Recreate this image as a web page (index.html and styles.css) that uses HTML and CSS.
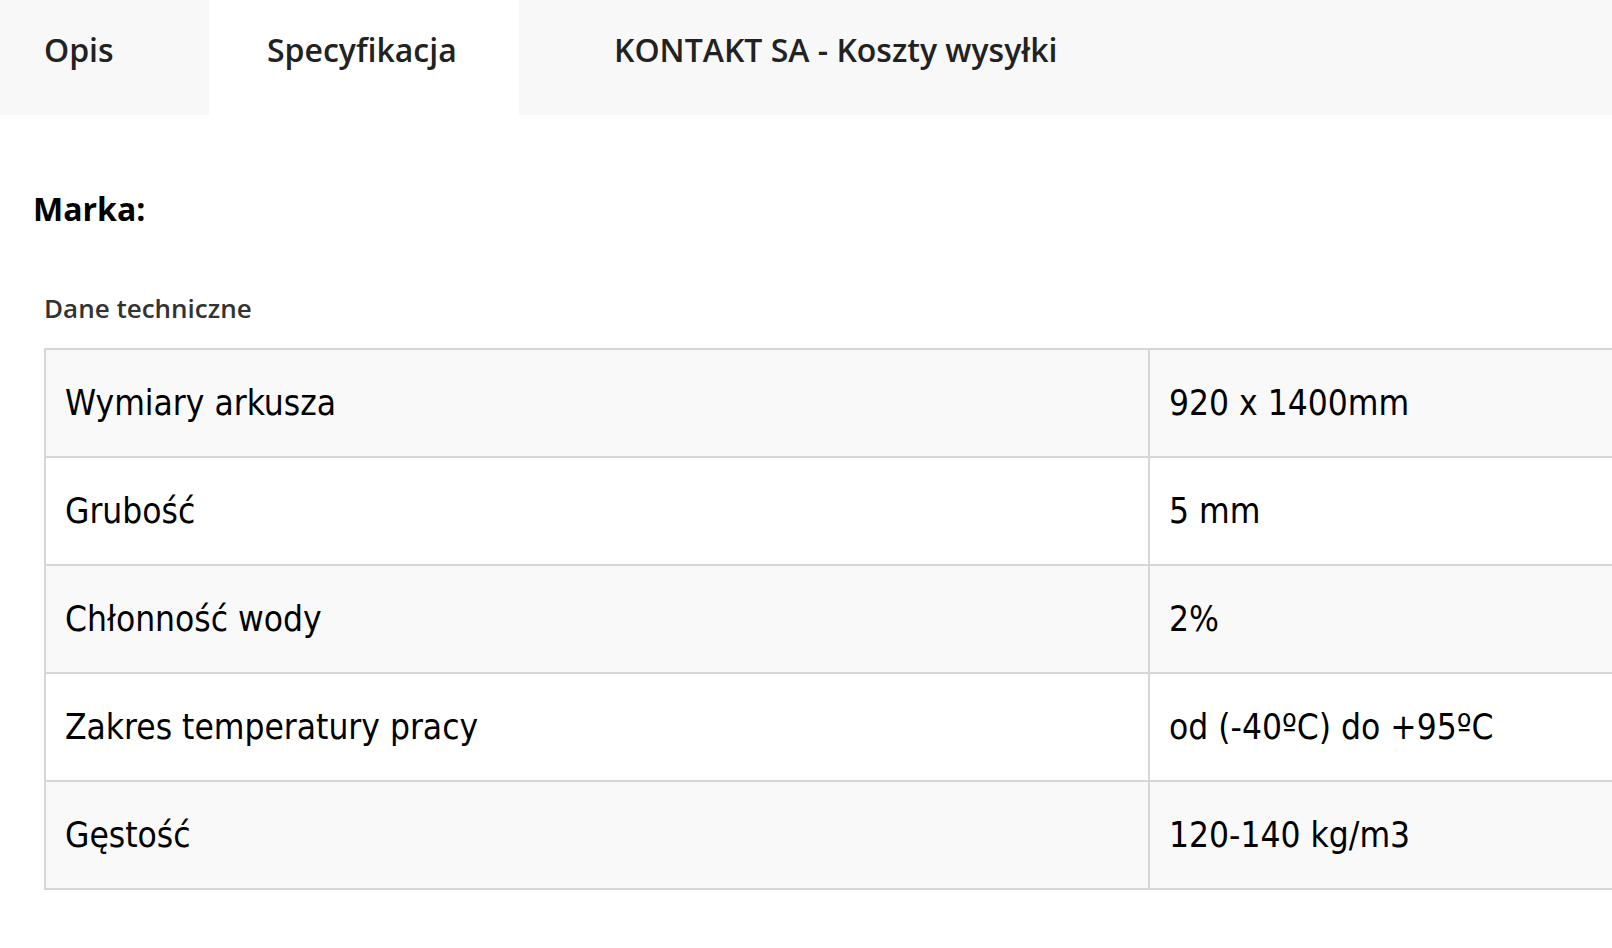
FILE: index.html
```html
<!DOCTYPE html>
<html lang="pl">
<head>
<meta charset="utf-8">
<title>Specyfikacja</title>
<link rel="stylesheet" href="styles.css">
</head>
<body>
<div class="page">
  <nav class="tabs">
    <div class="tab tab-opis">Opis</div>
    <div class="tab tab-spec active">Specyfikacja</div>
    <div class="tab tab-kontakt">KONTAKT SA - Koszty wysyłki</div>
  </nav>
  <main class="content">
    <h2 class="brand">Marka:</h2>
    <section class="spec">
      <h3 class="spec-title">Dane techniczne</h3>
      <table class="spec-table">
        <colgroup>
          <col class="col-name">
          <col class="col-value">
        </colgroup>
        <tbody>
          <tr><td>Wymiary arkusza</td><td>920 x 1400mm</td></tr>
          <tr><td>Grubość</td><td>5 mm</td></tr>
          <tr><td>Chłonność wody</td><td>2%</td></tr>
          <tr><td>Zakres temperatury pracy</td><td>od (-40ºC) do +95ºC</td></tr>
          <tr><td>Gęstość</td><td>120-140 kg/m3</td></tr>
        </tbody>
      </table>
    </section>
  </main>
</div>
</body>
</html>
```

FILE: styles.css
```css
html, body {
  margin: 0;
  padding: 0;
  background: #ffffff;
}

.page {
  width: 1612px;
  height: 948px;
  overflow: hidden;
  font-family: "Open Sans", "Noto Sans", sans-serif;
  color: #222;
}

.tabs {
  display: flex;
  height: 115px;
  background: #f8f8f8;
}

.tab {
  box-sizing: border-box;
  padding-top: 28px;
  font-size: 32px;
  font-weight: 600;
  line-height: 44px;
  color: #222;
  white-space: nowrap;
}

.tab-opis {
  width: 209px;
  padding-left: 44px;
}

.tab-spec {
  width: 310px;
  padding-left: 58px;
}

.tab-kontakt {
  width: 609px;
  padding-left: 95px;
}

.tab.active {
  background: #ffffff;
}

.content {
  padding: 72px 0 0 33px;
}

.brand {
  margin: 0;
  font-size: 32px;
  font-weight: 700;
  line-height: 44px;
  color: #000;
}

.spec {
  padding-left: 11px;
  margin-top: 62px;
}

.spec-title {
  margin: 0;
  font-size: 26px;
  font-weight: 600;
  line-height: 30px;
  color: #333;
}

.spec-table {
  margin-top: 25px;
  width: 1720px;
  table-layout: fixed;
  border-collapse: separate;
  border-spacing: 0;
  font-family: "DejaVu Sans Condensed", "DejaVu Sans", sans-serif;
  font-stretch: semi-condensed;
  font-size: 35px;
  color: #000;
}

.col-name {
  width: 1104px;
}

.spec-table td {
  box-sizing: border-box;
  padding: 0 0 0 19px;
  line-height: 106px;
  border-top: 2px solid #d6d6d6;
  border-left: 2px solid #d6d6d6;
  white-space: nowrap;
  background: #ffffff;
}

.spec-table tr:nth-child(odd) td {
  background: #f9f9f9;
}

.spec-table tr:last-child td {
  border-bottom: 2px solid #d6d6d6;
}
```
